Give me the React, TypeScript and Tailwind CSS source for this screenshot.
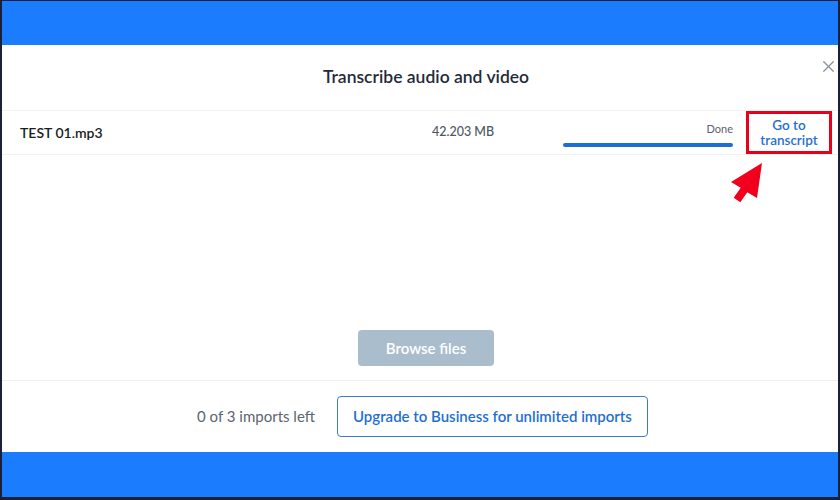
import { X } from 'lucide-react';

const FONT = { fontFamily: 'Lato, "Noto Sans", sans-serif' };

function FileRow() {
  return (
    <div className="flex h-[45px] items-center border-y border-[#f1f2f4] pl-[18px]">
      <span className="w-[412px] text-[14px] font-semibold text-[#1a1d21]">TEST 01.mp3</span>
      <span className="w-[131px] text-[12.5px] font-medium text-[#4d5661]">42.203 MB</span>
      <div className="flex w-[170px] flex-col items-end gap-[6px] pt-[3px]">
        <span className="text-[11px] text-[#5a636d]">Done</span>
        <div className="h-[4px] w-full rounded-full bg-[#1b6fd3]" />
      </div>
      <div className="ml-[13px] flex h-[43px] w-[86px] items-center justify-center border-[3px] border-[#e60019]">
        <span className="text-center text-[13.5px] leading-[15px] font-semibold text-[#1f6fd1]">
          Go to
          <br />
          transcript
        </span>
      </div>
    </div>
  );
}

export default function App() {
  return (
    <div
      className="flex h-[500px] w-[840px] flex-col border-x-2 border-b-[3px] border-t border-[#1a2035] bg-[#1b7cfe]"
      style={FONT}
    >
      <div className="h-[44px] shrink-0" />
      <div className="relative flex h-[407px] flex-col bg-white">
        <button className="absolute top-[12px] right-0 text-[#8a9097]" aria-label="Close">
          <X size={19} strokeWidth={1.5} />
        </button>
        {/* annotation arrow */}
        <svg className="absolute top-[115px] left-[724px]" width="40" height="44" viewBox="0 0 40 44">
          <polygon
            points="36,3 31,38 21.3,32.2 14.3,42.2 7.7,37.8 14.7,27.8 5,22"
            fill="#f0001c"
          />
        </svg>
        <h1 className="flex h-[65px] items-center justify-center pl-[12px] text-[17.5px] font-semibold text-[#1f2b3a]">
          Transcribe audio and video
        </h1>
        <FileRow />
        <div className="flex flex-1 items-end justify-center pb-[14px] pl-[12px]">
          <button className="h-[36px] w-[136px] rounded-[4px] bg-[#aabdcd] text-[15px] font-semibold text-white">
            Browse files
          </button>
        </div>
        <div className="flex h-[72px] items-center justify-center gap-[22px] border-t border-[#eceef0] pl-[5px]">
          <span className="text-[15px] text-[#5b6570]">0 of 3 imports left</span>
          <button className="h-[41px] rounded-[4px] border border-[#3d7cc9] px-[15px] text-[15px] font-semibold text-[#1f6fd1]">
            Upgrade to Business for unlimited imports
          </button>
        </div>
      </div>
      <div className="flex-1" />
    </div>
  );
}
